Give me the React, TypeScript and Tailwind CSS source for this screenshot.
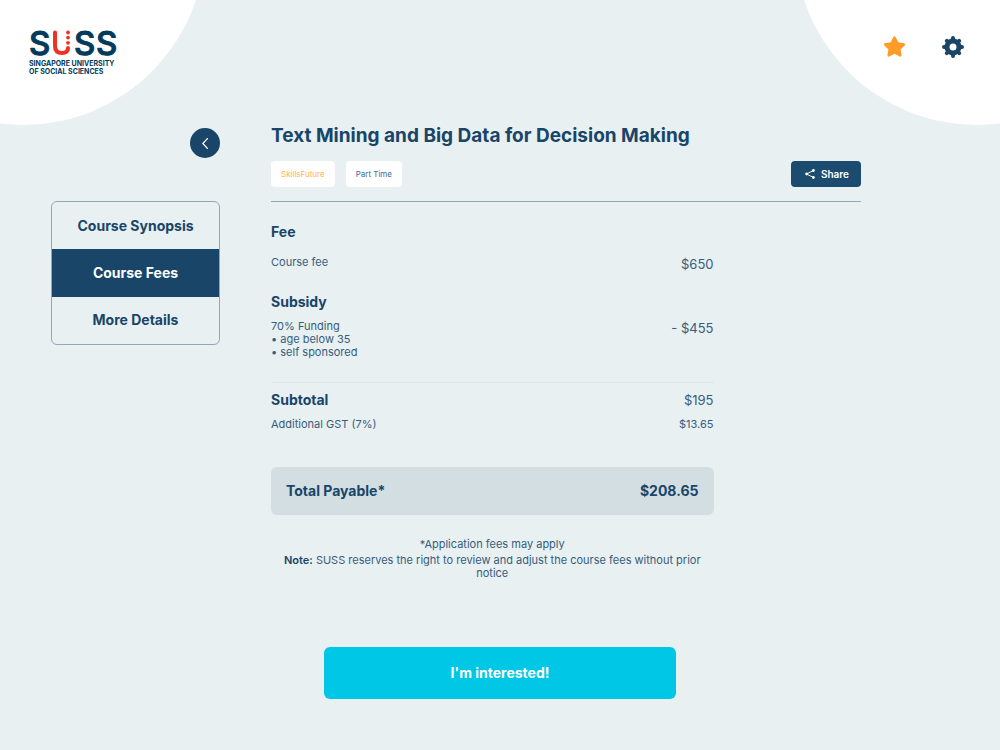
import React, { useState } from 'react';
import clsx from 'clsx';
import { FaStar } from 'react-icons/fa';

const tabs = ['Course Synopsis', 'Course Fees', 'More Details'];

const Logo: React.FC = () => (
  <svg width="92" height="60" viewBox="0 -10 92 60" role="img" aria-label="SUSS" className="font-['Inter',sans-serif]">
    <g fill="#003b5c" stroke="#003b5c" strokeWidth="1" strokeLinejoin="round" fontSize="33" fontWeight="500">
      <text x="0" y="25">S</text>
      <text x="45" y="25">S</text>
      <text x="67" y="25">S</text>
    </g>
    <path d="M26 2.5V16Q26 23 33 23Q39 23 39 18" fill="none" stroke="#ee3124" strokeWidth="4" strokeLinecap="round" />
    <g fill="#ee3124">
      <circle cx="39" cy="2.5" r="1.9" />
      <circle cx="39" cy="7.6" r="1.9" />
      <circle cx="39" cy="12.8" r="1.9" />
    </g>
    <g fill="#003b5c" fontSize="7" fontWeight="700">
      <text x="0" y="36">SINGAPORE UNIVERSITY</text>
      <text x="0" y="44">OF SOCIAL SCIENCES</text>
    </g>
  </svg>
);

const GearIcon: React.FC = () => (
  <svg width="22" height="22" viewBox="0 0 22 22" aria-hidden="true">
    <circle cx="11" cy="11" r="6" fill="none" stroke="#184568" strokeWidth="5" />
    <g stroke="#184568" strokeWidth="4" strokeLinecap="round">
      <path d="M11 2V4M11 18V20M2 11H4M18 11H20" />
      <path d="M4.8 4.8L6 6M16 16L17.2 17.2M17.2 4.8L16 6M6 16L4.8 17.2" />
    </g>
  </svg>
);

const ShareIcon: React.FC = () => (
  <svg width="10" height="10" viewBox="0 0 10 10" aria-hidden="true">
    <path d="M8.2 1.6L1.6 5L8.2 8.4" fill="none" stroke="currentColor" strokeWidth="1" />
    <circle cx="8.4" cy="1.5" r="1.4" fill="currentColor" />
    <circle cx="1.6" cy="5" r="1.4" fill="currentColor" />
    <circle cx="8.4" cy="8.5" r="1.4" fill="currentColor" />
  </svg>
);

const BackIcon: React.FC = () => (
  <svg width="6" height="11" viewBox="0 0 6 11" aria-hidden="true">
    <path d="M5.5 0.5L0.8 5.5L5.5 10.5" fill="none" stroke="currentColor" strokeWidth="1.2" strokeLinecap="round" />
  </svg>
);

const App: React.FC = () => {
  const [activeTab, setActiveTab] = useState('Course Fees');

  return (
    <div className="relative min-h-dvh overflow-hidden bg-[#e8f0f2] pb-12 font-['Inter',sans-serif] text-[#184568]">
      {/* corner circles */}
      <div className="absolute -left-[159px] -top-[239px] size-[364px] rounded-full bg-white" />
      <div className="absolute -right-[159px] -top-[239px] size-[364px] rounded-full bg-white" />

      <header className="relative flex h-[124px] items-start justify-between pl-[29px] pr-9 pt-5">
        <a href="#"><Logo /></a>
        <div className="flex items-center gap-9 pt-[15px]">
          <button type="button" aria-label="Favourites" className="text-[#ff9c27]"><FaStar size={23} /></button>
          <button type="button" aria-label="Settings"><GearIcon /></button>
        </div>
      </header>

      <main className="relative grid grid-cols-[169px_1fr] gap-x-[51px] pl-[51px] pr-[139px]">
        <aside className="flex flex-col pt-1">
          <button type="button" aria-label="Back" className="flex size-[30px] items-center justify-center self-end rounded-full bg-[#184568] text-white">
            <BackIcon />
          </button>
          <nav className="mt-[43px] flex h-36 flex-col overflow-hidden rounded-md border border-[#8fa8ba]">
            {tabs.map((tab) => (
              <button
                key={tab}
                type="button"
                onClick={() => setActiveTab(tab)}
                className={clsx('flex-1 text-sm font-bold', tab === activeTab && 'bg-[#184568] text-white')}
              >
                {tab}
              </button>
            ))}
          </nav>
        </aside>

        <div>
          <h1 className="text-[19px] font-bold leading-6">Text Mining and Big Data for Decision Making</h1>
          <div className="mt-[13px] flex items-center justify-between border-b border-[#8fa8ba] pb-[14px]">
            <div className="flex gap-[11px] text-[8px]">
              <span className="flex h-[26px] items-center rounded bg-white px-[10px] text-[#ffb04f]">SkillsFuture</span>
              <span className="flex h-[26px] items-center rounded bg-white px-[10px] text-[#46698a]">Part Time</span>
            </div>
            <button type="button" className="flex h-[26px] w-[70px] items-center justify-center gap-[6px] rounded bg-[#1b4b6f] pl-[2px] text-[10px] font-semibold text-white">
              <ShareIcon />
              Share
            </button>
          </div>

          <div className="w-3/4 pt-5 text-[11px] leading-[13px]">
            <h2 className="text-sm font-bold leading-5">Fee</h2>
            <dl className="mt-[14px] flex justify-between text-[#365d7c]">
              <dt>Course fee</dt>
              <dd className="text-[13px] leading-4">$650</dd>
            </dl>

            <h2 className="mt-5 text-sm font-bold leading-5">Subsidy</h2>
            <dl className="mt-2 flex justify-between text-[#365d7c]">
              <dt>
                70% Funding
                <ul>
                  <li>• age below 35</li>
                  <li>• self sponsored</li>
                </ul>
              </dt>
              <dd className="text-[13px] leading-4">- $455</dd>
            </dl>

            <dl className="mt-[23px] border-t border-[#dfe7ea] pt-[7px]">
              <div className="flex items-center justify-between">
                <dt className="text-sm font-bold leading-5">Subtotal</dt>
                <dd className="text-[13px] leading-5 text-[#365d7c]">$195</dd>
              </div>
              <div className="mt-2 flex justify-between text-[#365d7c]">
                <dt>Additional GST (7%)</dt>
                <dd>$13.65</dd>
              </div>
              <div className="mt-9 flex h-12 items-center justify-between rounded-md bg-[#d3dee3] px-[15px] text-sm font-bold">
                <dt>Total Payable*</dt>
                <dd>$208.65</dd>
              </div>
            </dl>

            <div className="mt-[23px] text-center text-[#365d7c]">
              <p>*Application fees may apply</p>
              <p className="mt-[3px]">
                <strong className="font-semibold text-[#184568]">Note:</strong> SUSS reserves the right to review and adjust the course fees without prior notice
              </p>
            </div>
          </div>
        </div>
      </main>

      <div className="relative mt-[67px] flex justify-center">
        <button type="button" className="h-[52px] w-[352px] rounded-md bg-[#00c7e6] text-sm font-bold text-white">I'm interested!</button>
      </div>
    </div>
  );
};

export default App;
